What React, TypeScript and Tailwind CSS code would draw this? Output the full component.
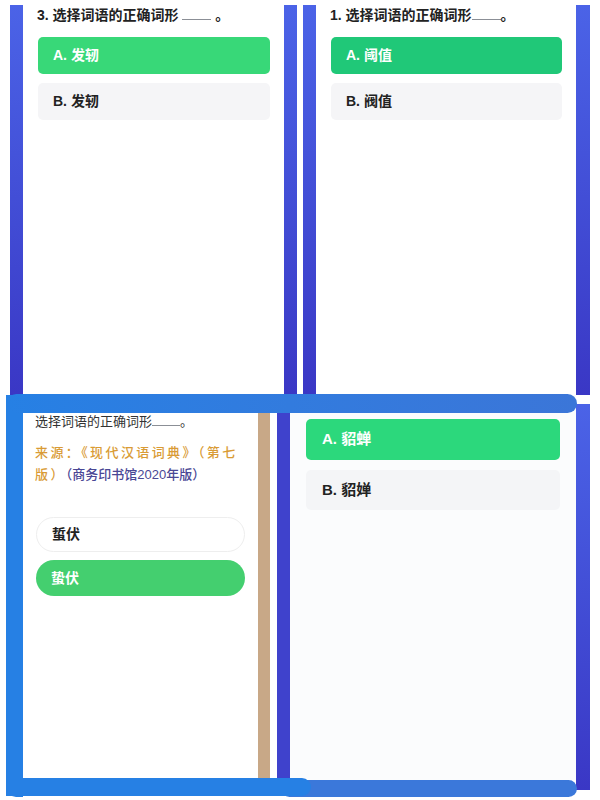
import React from 'react';

// Collage of four quiz screenshots, framed by coloured bars

const font = "font-['Liberation_Sans','Noto_Sans_CJK_SC',sans-serif]";

const Blank = ({ w = 'w-[29px]' }: { w?: string }) => (
  <span className={`inline-block ${w} border-b border-[#8b8f96] align-baseline h-[12px]`} />
);

const Bar = ({ className = '' }: { className?: string }) => (
  <div className={`bg-gradient-to-b from-[#4b63e7] to-[#3a37c5] ${className}`} />
);

interface QuizPanelProps {
  title: React.ReactNode;
  a: string;
  b: string;
  green: string;
}

const QuizPanel: React.FC<QuizPanelProps> = ({ title, a, b, green }) => (
  <div className="flex-1 bg-white pl-[14px] pr-[14px]">
    <div className="text-[14px] leading-[20px] font-bold text-[#222]">{title}</div>
    <div className="mt-[12px] flex flex-col gap-[9px] pl-[1px]">
      <div className={`h-[37px] rounded-[5px] ${green} flex items-center pl-[15px] text-[14px] font-bold text-white`}>
        {a}
      </div>
      <div className="h-[37px] rounded-[5px] bg-[#f5f5f7] flex items-center pl-[15px] text-[14px] font-bold text-[#222]">
        {b}
      </div>
    </div>
  </div>
);

export default function App() {
  return (
    <div className={`relative w-[600px] h-[800px] bg-white overflow-hidden ${font}`}>
      {/* Top row */}
      <div className="flex h-[395px] pt-[5px]">
        <div className="flex w-[287px] ml-[10px]">
          <Bar className="w-[13px]" />
          <QuizPanel
            title={<>3. 选择词语的正确词形 <Blank /> 。</>}
            a="A. 发轫"
            b="B. 发轫"
            green="bg-[#38d878]"
          />
          <Bar className="w-[13px]" />
        </div>
        <div className="flex w-[287px] ml-[6px]">
          <Bar className="w-[13px]" />
          <QuizPanel
            title={<>1. 选择词语的正确词形<Blank />。</>}
            a="A. 阈值"
            b="B. 阀值"
            green="bg-[#20c878]"
          />
          <Bar className="w-[14px]" />
        </div>
      </div>

      {/* Bottom row */}
      <div className="flex h-[405px]">
        <div className="ml-[6px] w-[17px] mb-[3px] bg-[#2680e4] rounded-bl-[10px]" />
        <div className="w-[235px] bg-white pt-[17px] pl-[12px] pr-[13px]">
          <div className="text-[13px] leading-[20px] text-[#333]">
            选择词语的正确词形<Blank w="w-[28px]" />。
          </div>
          <div className="mt-[10px] text-[13px] leading-[22px] font-medium whitespace-nowrap">
            <div className="text-[#d99b35] tracking-[2.4px]">来源：《现代汉语词典》（第七</div>
            <div>
              <span className="text-[#d99b35] tracking-[2.4px]">版）</span>
              <span className="text-[#4a4795]">（商务印书馆2020年版）</span>
            </div>
          </div>
          <div className="mt-[31px] flex flex-col gap-[8px] pl-[1px]">
            <div className="h-[35px] rounded-full border border-[#eeeeee] bg-white flex items-center pl-[15px] text-[14px] font-bold text-[#222]">
              蜇伏
            </div>
            <div className="h-[36px] rounded-full bg-[#44cf6f] flex items-center pl-[15px] text-[14px] font-bold text-white">
              蛰伏
            </div>
          </div>
        </div>
        <div className="w-[12px] bg-[#c8a887] mt-[16px] mb-[22px]" />
        <div className="w-[7px] bg-white" />
        <div className="w-[13px] bg-[#3f42cc] mt-[10px] mb-[22px]" />
        <div className="w-[286px] bg-[#fbfcfd] pt-[24px] px-[16px] mb-[20px]">
          <div className="flex flex-col gap-[10px]">
            <div className="h-[41px] rounded-[5px] bg-[#2cd87c] flex items-center pl-[16px] text-[15px] font-bold text-white">
              A. 貂蝉
            </div>
            <div className="h-[40px] rounded-[5px] bg-[#f4f5f7] flex items-center pl-[16px] text-[15px] font-bold text-[#222]">
              B. 貂婵
            </div>
          </div>
        </div>
        <Bar className="w-[14px] mt-[9px] mb-[10px]" />
      </div>

      {/* Frame bars laid over the collage */}
      <div className="absolute left-[7px] top-[394px] w-[570px] h-[19px] rounded-full bg-gradient-to-r from-[#2680e4] to-[#3b76d8]" />
      <div className="absolute left-[281px] top-[780px] w-[296px] h-[17px] rounded-full bg-[#3b78da]" />
      <div className="absolute left-[6px] top-[778px] w-[305px] h-[18px] rounded-r-full bg-[#2680e4]" />
    </div>
  );
}
